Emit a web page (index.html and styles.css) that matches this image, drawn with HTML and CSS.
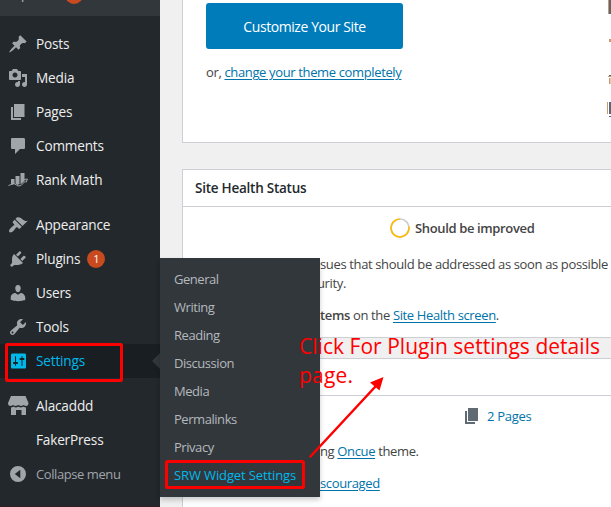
FILE: index.html
```html
<!DOCTYPE html>
<html lang="en">
<head>
<meta charset="utf-8">
<title>Dashboard</title>
<link rel="stylesheet" href="styles.css">
</head>
<body>
<div class="screen">
  <nav class="sidebar">
    <div class="updates"><span>Updates</span><b class="badge"></b></div>
    <a class="item posts"><svg viewBox="0 0 20 20"><path d="M10.44 3.02l1.82-1.82 6.36 6.35-1.83 1.82c-1.05-.68-2.48-.57-3.41.36l-.75.75c-.92.93-1.04 2.35-.35 3.41l-1.83 1.82-2.41-2.41-2.8 2.79c-.42.42-3.38 2.71-3.8 2.29s1.86-3.39 2.28-3.81l2.79-2.79L4.1 9.36l1.83-1.82c1.05.69 2.48.57 3.4-.36l.75-.75c.93-.92 1.05-2.35.36-3.41z"/></svg><span>Posts</span></a>
    <a class="item"><svg viewBox="0 0 20 20"><path d="M13 11V4c0-.55-.45-1-1-1h-1.67L9 1H5L3.67 3H2c-.55 0-1 .45-1 1v7c0 .55.45 1 1 1h10c.55 0 1-.45 1-1zM7 4.5c1.38 0 2.5 1.12 2.5 2.5S8.38 9.5 7 9.5 4.5 8.38 4.5 7 5.62 4.5 7 4.5zM14 6h5v10.5c0 1.38-1.12 2.5-2.5 2.5S14 17.88 14 16.5s1.12-2.5 2.5-2.5c.17 0 .34.02.5.05V9h-3V6zm-4 8.05V13h2v3.5c0 1.38-1.12 2.5-2.5 2.5S7 17.88 7 16.5 8.12 14 9.5 14c.17 0 .34.02.5.05z"/></svg><span>Media</span></a>
    <a class="item"><svg viewBox="0 0 20 20"><path d="M6 15V2h10.500v13H6zm-1 1h8v2H3V5h2v11z"/></svg><span>Pages</span></a>
    <a class="item"><svg viewBox="0 0 20 20"><path d="M4 2h11.500c1 0 1.500.6 1.500 1.500v8c0 1-.5 1.500-1.500 1.500H12l-5 5v-5H4.500c-1 0-1.500-.5-1.500-1.500v-8C3 2.600 3.300 2 4 2z"/></svg><span>Comments</span></a>
    <a class="item"><svg viewBox="0 0 20 20"><path d="M3 9h3.500v5L3 15zM7.500 6h4v8l-2 1-2-1.500zM12.500 3h4v8l-4 3.500z"/><path class="stroke" d="M0.500 15.500L6 13.500l4 2.500 3-.5 5-5M15.500 9.500l4-.5-1.500 3.500"/></svg><span>Rank Math</span></a>
    <a class="item gap"><svg viewBox="0 0 20 20"><path d="M14.48 11.06L7.41 3.99l1.5-1.5c.5-.56 2.3-.47 3.51.32 1.21.8 1.43 1.28 2.91 2.1 1.18.64 2.45 1.26 4.45.85zm-.71.71L6.7 4.7 4.93 6.47c-.39.39-.39 1.02 0 1.41l1.06 1.06c.39.39.39 1.03 0 1.42-.6.6-1.43 1.11-2.21 1.69-.35.26-.7.53-1.01.84C1.43 14.23.4 16.08 1.4 17.07c.99 1 2.84-.03 4.18-1.36.31-.31.58-.66.85-1.02.57-.78 1.08-1.61 1.69-2.21.39-.39 1.02-.39 1.41 0l1.06 1.06c.39.39 1.02.39 1.41 0z"/></svg><span>Appearance</span></a>
    <a class="item"><svg viewBox="0 0 20 20"><path d="M13.11 4.36L9.87 7.6 8 5.73l3.24-3.24c.35-.34 1.05-.2 1.56.32.52.51.66 1.21.31 1.55zm-8 1.77l.91-1.12 9.01 9.01-1.19.84c-.71.71-2.63 1.16-3.82 1.16H6.14L4.9 17.26c-.59.59-1.54.59-2.12 0-.59-.58-.59-1.53 0-2.12l1.24-1.24v-3.88c0-1.13.4-3.19 1.09-3.89zm7.26 3.97l3.24-3.24c.34-.35 1.04-.21 1.55.31.52.51.66 1.21.31 1.55l-3.24 3.25z"/></svg><span>Plugins</span><b class="badge">1</b></a>
    <a class="item"><svg viewBox="0 0 20 20"><path d="M10 9.25c-2.27 0-2.73-3.44-2.73-3.44C7 4.02 7.82 2 9.97 2c2.16 0 2.98 2.02 2.71 3.81 0 0-.41 3.44-2.68 3.44zm0 2.57L12.72 10c2.39 0 4.52 2.33 4.52 4.53v2.49s-3.65 1.13-7.24 1.13c-3.65 0-7.24-1.13-7.24-1.13v-2.49c0-2.25 1.94-4.48 4.47-4.48z"/></svg><span>Users</span></a>
    <a class="item"><svg viewBox="0 0 20 20"><path d="M16.68 9.77c-1.34 1.34-3.3 1.67-4.95.99l-5.41 6.52c-.99.99-2.59.99-3.58 0s-.99-2.59 0-3.57l6.52-5.42c-.68-1.65-.35-3.61.99-4.95 1.28-1.28 3.12-1.62 4.72-1.06l-2.89 2.89 2.82 2.82 2.86-2.87c.53 1.58.18 3.39-1.08 4.65zM3.81 16.21c.4.39 1.04.39 1.43 0 .4-.4.4-1.04 0-1.43-.39-.4-1.03-.4-1.43 0-.39.39-.39 1.03 0 1.43z"/></svg><span>Tools</span></a>
    <a class="item current"><svg viewBox="0 0 20 20"><path d="M18 16V4c0-1.100-.9-1.500-1.500-1.500h-12C3.500 2.500 3 3 3 4v12c0 1.100.6 1.500 1.500 1.500h12c1 0 1.500-.5 1.500-1.500zM8 11h1c.55 0 1 .45 1 1s-.45 1-1 1H8v1.5c0 .28-.22.5-.5.5s-.5-.22-.5-.5V13H6c-.55 0-1-.45-1-1s.45-1 1-1h1V5.5c0-.28.22-.5.5-.5s.5.22.5.5V11zm5.500-2h-1c-.55 0-1-.45-1-1s.45-1 1-1h1V5.5c0-.28.22-.5.5-.5s.5.22.5.5V7h1c.55 0 1 .45 1 1s-.45 1-1 1h-1v5.500c0 .28-.22.5-.5.5s-.5-.22-.5-.5V9z"/></svg><span>Settings</span></a>
    <a class="item gap"><svg viewBox="0 0 20 20"><path d="M3 0h14.500l3 7c0 2-1 3-2.500 3s-2-1-2.500-1c-.5 0-1 1-2.500 1s-2-1-2.700-1c-.7 0-1.300 1-2.800 1S5.500 9 5 9c-.5 0-1 1-2.500 1S0 9 0 7zM3 11.500c1.500 0 2-.7 2.500-.7s1 .7 2.500.7 1.800-.7 2.300-.7 1 .7 2.500.7 2-.7 2.500-.7 1 .7 2.700.7V19h-4.500v-5H8v5H3z"/></svg><span>Alacaddd</span></a>
    <a class="item"><i class="blank"></i><span>FakerPress</span></a>
    <a class="item collapse"><svg viewBox="0 0 20 20"><path fill-rule="evenodd" d="M10 2a8 8 0 1 1 0 16 8 8 0 0 1 0-16zM12.300 5.800v8.400L6.800 10z"/></svg><span>Collapse menu</span></a>
    <div class="edge"></div>
  </nav>

  <main class="content">
    <section class="card welcome">
      <a class="button"><span>Customize Your Site</span></a>
      <p class="theme">or, <a class="link">change your theme completely</a></p>
    </section>
    <section class="card health">
      <h2>Site Health Status</h2>
      <div class="status"><svg viewBox="0 0 20 20"><circle class="track" cx="10" cy="10" r="9"/><path class="progress" d="M18.900 8.500A9 9 0 1 1 9.500 1"/></svg><span>Should be improved</span></div>
      <p>sues that should be addressed as soon as possible</p>
      <p class="security">urity.</p>
      <p class="items"><b>tems</b> on the <a class="link">Site Health screen</a>.</p>
    </section>
    <section class="card glance">
      <h2></h2>
      <div class="pages"><svg viewBox="0 0 20 20"><path d="M6 15V2h10v13H6zm-1 1h8v2H3V5h2v11z"/></svg><span>2 Pages</span></div>
      <p>ng <a class="link">Oncue</a> theme.</p>
      <p class="search"><a class="link">scouraged</a></p>
    </section>
  </main>

  <svg class="slivers" viewBox="0 0 6 120"><path class="dark" d="M4 0h2v14H4zM4 102h2v12H4zM4 116h2v1H4zM4 75h2v1H4z"/><path class="tan" d="M3 0h1v14H3zM4 39h2v3H4zM3 76h3v1H3zM4 78h1.500v6H4zM2 102h1v12H2z"/></svg>

  <ul class="submenu">
    <li>General</li><li>Writing</li><li>Reading</li><li>Discussion</li><li>Media</li><li>Permalinks</li><li>Privacy</li><li class="active">SRW Widget Settings</li>
  </ul>

  <svg class="notes" viewBox="0 0 611 507">
    <rect x="6.500" y="344.500" width="115" height="36" rx="1"/>
    <rect x="166.500" y="461.500" width="137" height="26" rx="1"/>
    <path class="shaft" d="M310.500 456.500L375 387"/>
    <path class="head" d="M383.500 377L379.500 390.500 370 382.500z"/>
    <text x="299" y="354" textLength="301">Click For Plugin settings details</text>
    <text x="299" y="383" textLength="54">page.</text>
  </svg>
</div>
</body>
</html>
```
FILE: styles.css
```css
* { box-sizing: border-box; }
body { margin: 0; }
.screen {
  position: relative;
  display: flex;
  width: 611px;
  height: 507px;
  overflow: hidden;
  background: #f0f0f0;
  color: #444;
  font: 13px/19px "Open Sans", "Noto Sans", sans-serif;
  letter-spacing: -.36px;
}
p, h2, ul { margin: 0; padding: 0; }

.sidebar {
  display: flex;
  flex-direction: column;
  flex: none;
  width: 160px;
  background: #23282d;
  color: #eee;
  font-size: 13.6px;
  letter-spacing: -.18px;
}
.updates {
  display: flex;
  align-items: flex-end;
  flex: none;
  height: 16px;
  margin-bottom: 11px;
  padding: 0 0 12px 12px;
  background: #32373c;
  color: #b4b9be;
  font-size: 13px;
  letter-spacing: -.4px;
  overflow: hidden;
}
.item {
  position: relative;
  display: flex;
  align-items: center;
  flex: none;
  height: 34px;
  padding-left: 8px;
}
.item span { padding-bottom: 2px; }
.item svg, .blank { width: 20px; height: 20px; margin-right: 8px; overflow: visible; fill: #a0a5aa; }
.item .stroke { fill: none; stroke: #a0a5aa; stroke-width: 1; }
.gap { margin-top: 11px; }
.badge {
  width: 18px;
  height: 18px;
  margin-left: 7px;
  border-radius: 50%;
  background: #ca4a1f;
  color: #fff;
  font-size: 11px;
  font-weight: 400;
  line-height: 18px;
  text-align: center;
}
.updates .badge { margin-left: 5px; }
.current { background: #191e23; color: #00b9eb; }
.current svg { fill: #00b9eb; }
.current::after {
  content: "";
  position: absolute;
  top: 9px;
  right: 0;
  border: 8px solid transparent;
  border-right-color: #32373c;
  border-left-width: 0;
}
.collapse { color: #a0a5aa; font-size: 13px; letter-spacing: -.42px; }
.collapse span { padding-bottom: 0; }
.edge { height: 1px; margin-top: auto; background: #301c25; }

.content { flex: none; width: 450px; margin-left: 22px; }
.card { border: 1px solid #ccd0d4; background: #fff; white-space: nowrap; }
.welcome { height: 143px; margin-bottom: 26px; padding: 3px 0 0 23px; border-top: 0; }
.button {
  display: flex;
  align-items: center;
  justify-content: center;
  width: 197px;
  height: 46px;
  border-radius: 3px;
  background: #007cba;
  color: #fff;
  font-size: 14px;
  letter-spacing: -.42px;
}
.theme { margin-top: 14px; }
.link { color: #0073aa; text-decoration: underline; text-underline-offset: 2px; }
h2 {
  height: 37px;
  padding-left: 12px;
  border-bottom: 1px solid #ccd0d4;
  color: #23282d;
  font-size: 13.5px;
  font-weight: 600;
  letter-spacing: -.25px;
  line-height: 36px;
}
b { font-weight: 600; }
.health { height: 169px; margin-bottom: 20px; }
.status { display: flex; align-items: center; height: 20px; margin: 11px 0 17px 207px; font-weight: 600; }
.status svg { width: 20px; height: 20px; margin-right: 5px; fill: none; stroke-width: 1.6; }
.track { stroke: #ccc; }
.progress { stroke: #ffb900; }
.health p, .glance p { padding-left: 137px; }
.health .security { padding-left: 134px; }
.items { margin-top: 13px; }
.glance { height: 170px; }
.pages { display: flex; align-items: center; height: 20px; margin: 10px 0 16px 279px; color: #0073aa; letter-spacing: -.3px; }
.pages svg { width: 20px; height: 20px; margin-right: 5px; fill: #606a73; }
.search { margin-top: 13px; }

.slivers { position: absolute; top: 0; right: 0; width: 6px; height: 120px; }
.slivers .dark { fill: #5b6673; }
.slivers .tan { fill: #c99a6a; }

.submenu {
  position: absolute;
  top: 258px;
  left: 160px;
  width: 160px;
  height: 239px;
  padding: 7px 14px;
  background: #32373c;
  box-shadow: 0 3px 5px rgba(0, 0, 0, .2);
  color: #b4b9be;
  list-style: none;
  letter-spacing: -.45px;
  line-height: 28px;
  white-space: nowrap;
}
.submenu .active { color: #00b9eb; letter-spacing: -.12px; }

.notes { position: absolute; inset: 0; width: 611px; height: 507px; }
.notes rect { fill: none; stroke: #f00; stroke-width: 3; }
.notes .shaft { stroke: #f00; stroke-width: 2.5; stroke-linecap: round; }
.notes .head { fill: #f00; }
.notes text { fill: #f00; font: 21px "Open Sans", "Noto Sans", sans-serif; letter-spacing: 0; }
```
